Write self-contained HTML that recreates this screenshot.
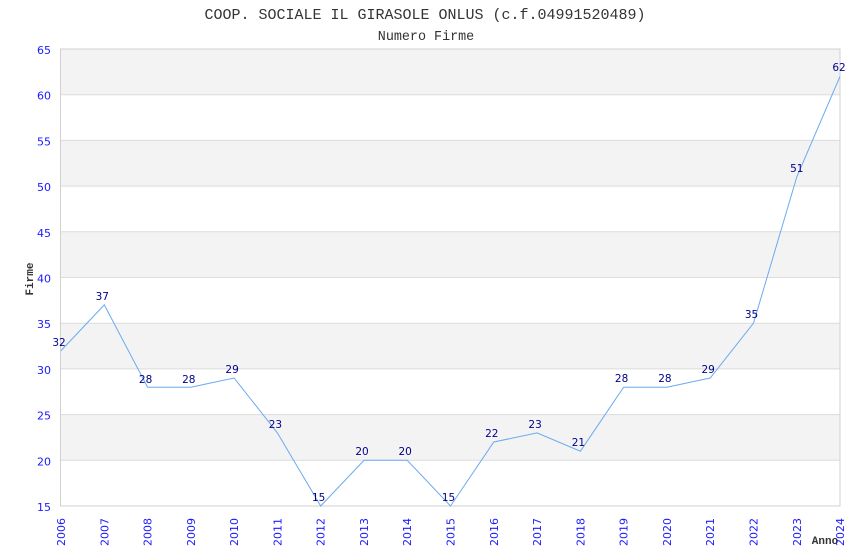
<!DOCTYPE html>
<html><head><meta charset="utf-8"><style>body{margin:0;background:#fff}</style></head><body>
<svg width="850" height="550" xmlns="http://www.w3.org/2000/svg" style="display:block">
<rect width="850" height="550" fill="#fff"/>
<g fill="#f3f3f3">
<rect x="61" y="49" width="779" height="45.7"/>
<rect x="61" y="140.4" width="779" height="45.7"/>
<rect x="61" y="231.8" width="779" height="45.7"/>
<rect x="61" y="323.2" width="779" height="45.7"/>
<rect x="61" y="414.6" width="779" height="45.7"/>
</g>
<g stroke="#dcdcdc" stroke-width="1">
<line x1="61" y1="94.7" x2="840" y2="94.7"/><line x1="61" y1="140.4" x2="840" y2="140.4"/>
<line x1="61" y1="186.1" x2="840" y2="186.1"/><line x1="61" y1="231.8" x2="840" y2="231.8"/>
<line x1="61" y1="277.5" x2="840" y2="277.5"/><line x1="61" y1="323.2" x2="840" y2="323.2"/>
<line x1="61" y1="368.9" x2="840" y2="368.9"/><line x1="61" y1="414.6" x2="840" y2="414.6"/>
<line x1="61" y1="460.3" x2="840" y2="460.3"/>
</g>
<rect x="60.5" y="49" width="779.5" height="457" fill="none" stroke="#d0d0d0"/>
<g font-family="Liberation Mono, monospace" fill="#333" text-anchor="middle">
<text x="425" y="19" font-size="15">COOP. SOCIALE IL GIRASOLE ONLUS (c.f.04991520489)</text>
<text x="426" y="40" font-size="13.4">Numero Firme</text>
<text x="33" y="279" font-size="11" font-weight="bold" transform="rotate(-90 33 279)">Firme</text>
<text x="825" y="544" font-size="11" font-weight="bold">Anno</text>
</g>
<g font-family="DejaVu Sans, sans-serif" font-size="11" fill="#1a1aff" text-anchor="end">
<text x="51" y="54">65</text><text x="51" y="99.7">60</text><text x="51" y="145.4">55</text>
<text x="51" y="191.1">50</text><text x="51" y="236.8">45</text><text x="51" y="282.5">40</text>
<text x="51" y="328.2">35</text><text x="51" y="373.9">30</text><text x="51" y="419.6">25</text>
<text x="51" y="465.3">20</text><text x="51" y="511">15</text>
</g>
<g font-family="DejaVu Sans, sans-serif" font-size="11" fill="#1a1aff" text-anchor="start">
<text transform="translate(65,546) rotate(-90)">2006</text>
<text transform="translate(108.3,546) rotate(-90)">2007</text>
<text transform="translate(151.6,546) rotate(-90)">2008</text>
<text transform="translate(194.8,546) rotate(-90)">2009</text>
<text transform="translate(238.1,546) rotate(-90)">2010</text>
<text transform="translate(281.4,546) rotate(-90)">2011</text>
<text transform="translate(324.7,546) rotate(-90)">2012</text>
<text transform="translate(368,546) rotate(-90)">2013</text>
<text transform="translate(411.2,546) rotate(-90)">2014</text>
<text transform="translate(454.5,546) rotate(-90)">2015</text>
<text transform="translate(497.8,546) rotate(-90)">2016</text>
<text transform="translate(541.1,546) rotate(-90)">2017</text>
<text transform="translate(584.4,546) rotate(-90)">2018</text>
<text transform="translate(627.6,546) rotate(-90)">2019</text>
<text transform="translate(670.9,546) rotate(-90)">2020</text>
<text transform="translate(714.2,546) rotate(-90)">2021</text>
<text transform="translate(757.5,546) rotate(-90)">2022</text>
<text transform="translate(800.8,546) rotate(-90)">2023</text>
<text transform="translate(844,546) rotate(-90)">2024</text>
</g>
<polyline fill="none" stroke="#6aaaf0" stroke-width="1" points="61,350.6 104.3,304.9 147.6,387.2 190.8,387.2 234.1,378 277.4,432.9 320.7,506 364,460.3 407.2,460.3 450.5,506 493.8,442 537.1,432.9 580.4,451.2 623.6,387.2 666.9,387.2 710.2,378 753.5,323.2 796.8,176.9 840,76.4"/>
<g font-family="DejaVu Sans, sans-serif" font-size="10.5" fill="#00008b" text-anchor="middle">
<text x="59" y="346">32</text><text x="102.3" y="300">37</text><text x="145.6" y="383">28</text>
<text x="188.8" y="383">28</text><text x="232.1" y="373">29</text><text x="275.4" y="428">23</text>
<text x="318.7" y="501">15</text><text x="362" y="455">20</text><text x="405.2" y="455">20</text>
<text x="448.5" y="501">15</text><text x="491.8" y="437">22</text><text x="535.1" y="428">23</text>
<text x="578.4" y="446">21</text><text x="621.6" y="382">28</text><text x="664.9" y="382">28</text>
<text x="708.2" y="373">29</text><text x="751.5" y="318">35</text><text x="796.8" y="172">51</text>
<text x="839" y="71">62</text>
</g>
</svg>
</body></html>
